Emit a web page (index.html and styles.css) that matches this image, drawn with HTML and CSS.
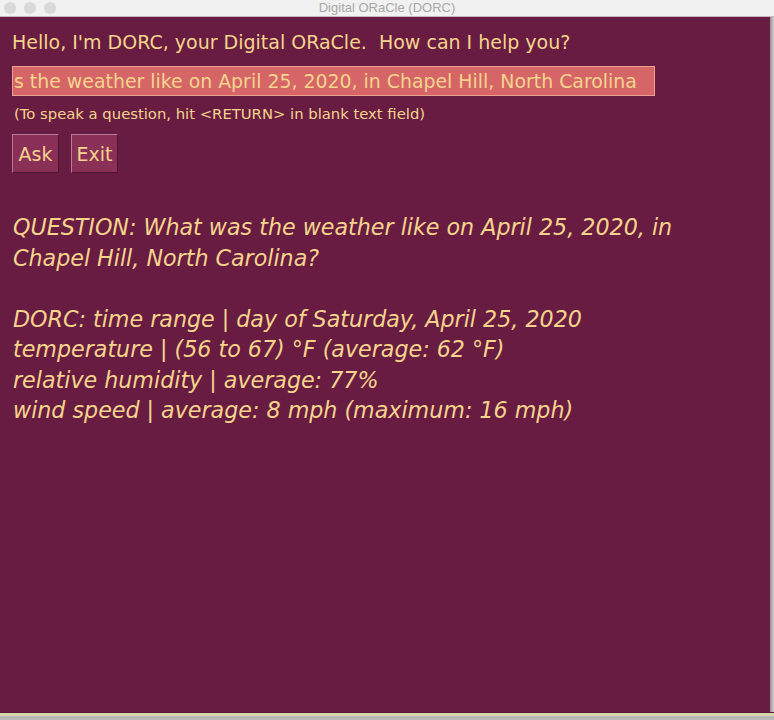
FILE: index.html
```html
<!DOCTYPE html>
<html>
<head>
<meta charset="utf-8">
<title>Digital ORaCle (DORC)</title>
<link rel="stylesheet" href="styles.css">
</head>
<body>
<div class="window">
  <div class="titlebar">
    <div class="lights"><span class="light"></span><span class="light"></span><span class="light"></span></div>
    <div class="title">Digital ORaCle (DORC)</div>
  </div>
  <div class="frame">
    <div class="content">
      <div class="greeting">Hello, I'm DORC, your Digital ORaCle.&nbsp; How can I help you?</div>
      <div class="field">s the weather like on April 25, 2020, in Chapel Hill, North Carolina</div>
      <div class="hint">(To speak a question, hit &lt;RETURN&gt; in blank text field)</div>
      <div class="buttons">
        <button class="btn btn-ask">Ask</button>
        <button class="btn btn-exit">Exit</button>
      </div>
      <div class="output">
        <p>QUESTION: What was the weather like on April 25, 2020, in<br>Chapel Hill, North Carolina?</p>
        <p>DORC: time range | day of Saturday, April 25, 2020<br>temperature | (56 to 67) °F (average: 62 °F)<br>relative humidity | average: 77%<br>wind speed | average: 8 mph (maximum: 16 mph)</p>
      </div>
    </div>
    <div class="edge"></div>
  </div>
  <div class="bottom"></div>
</div>
</body>
</html>
```
FILE: styles.css
```css
html, body {
  margin: 0;
  padding: 0;
  background: #b4b4b4;
}
.window {
  width: 774px;
  height: 720px;
  display: flex;
  flex-direction: column;
  font-family: "DejaVu Sans", "Liberation Sans", sans-serif;
  color: #f6d48c;
}
.titlebar {
  height: 16px;
  background: #f1f1f1;
  border-bottom: 1px solid #c9b3bd;
  display: flex;
  align-items: center;
  position: relative;
}
.lights {
  display: flex;
  gap: 8px;
  padding-left: 4px;
}
.light {
  width: 12px;
  height: 12px;
  border-radius: 50%;
  background: #d9d9d9;
}
.title {
  position: absolute;
  left: 0;
  right: 0;
  text-align: center;
  font-family: "Liberation Sans", sans-serif;
  font-size: 13px;
  color: #a8a8a8;
  line-height: 16px;
}
.frame {
  flex: 1;
  display: flex;
}
.content {
  flex: 1;
  background: #681c42;
  padding: 0 0 0 12px;
}
.edge {
  width: 4px;
  background: linear-gradient(to right, #9a8e94, #d0d0d0);
}
.bottom {
  height: 8px;
  background: linear-gradient(to bottom, #5a1838 0, #5a1838 1px, #d8d6ae 1px, #d8d6ae 4px, #b8b8b8 4px);
}
.greeting {
  font-size: 19px;
  margin-top: 12px;
  line-height: 26px;
}
.field {
  margin-top: 11px;
  width: 640px;
  height: 28px;
  background: #d56566;
  border: 1px solid #eaa28f;
  font-size: 18.9px;
  line-height: 28px;
  padding-left: 1px;
  box-sizing: content-box;
  white-space: nowrap;
  overflow: hidden;
}
.hint {
  font-size: 14.8px;
  margin-top: 8px;
  padding-left: 2px;
  line-height: 20px;
}
.buttons {
  display: flex;
  gap: 12px;
  margin-top: 10px;
}
.btn {
  font-family: inherit;
  font-size: 19px;
  color: #f6d48c;
  background: #8a3057;
  border-top: 1px solid #b77a92;
  border-left: 1px solid #b77a92;
  border-right: 1px solid #4c1530;
  border-bottom: 1px solid #4c1530;
  height: 39px;
  padding: 0;
  margin: 0;
  text-align: center;
}
.btn-ask {
  width: 47px;
}
.btn-exit {
  width: 47px;
}
.output {
  margin-top: 39px;
  font-size: 22.2px;
  font-style: italic;
  line-height: 30.5px;
  padding-left: 1px;
}
.output p {
  margin: 0 0 30.5px 0;
}
```
